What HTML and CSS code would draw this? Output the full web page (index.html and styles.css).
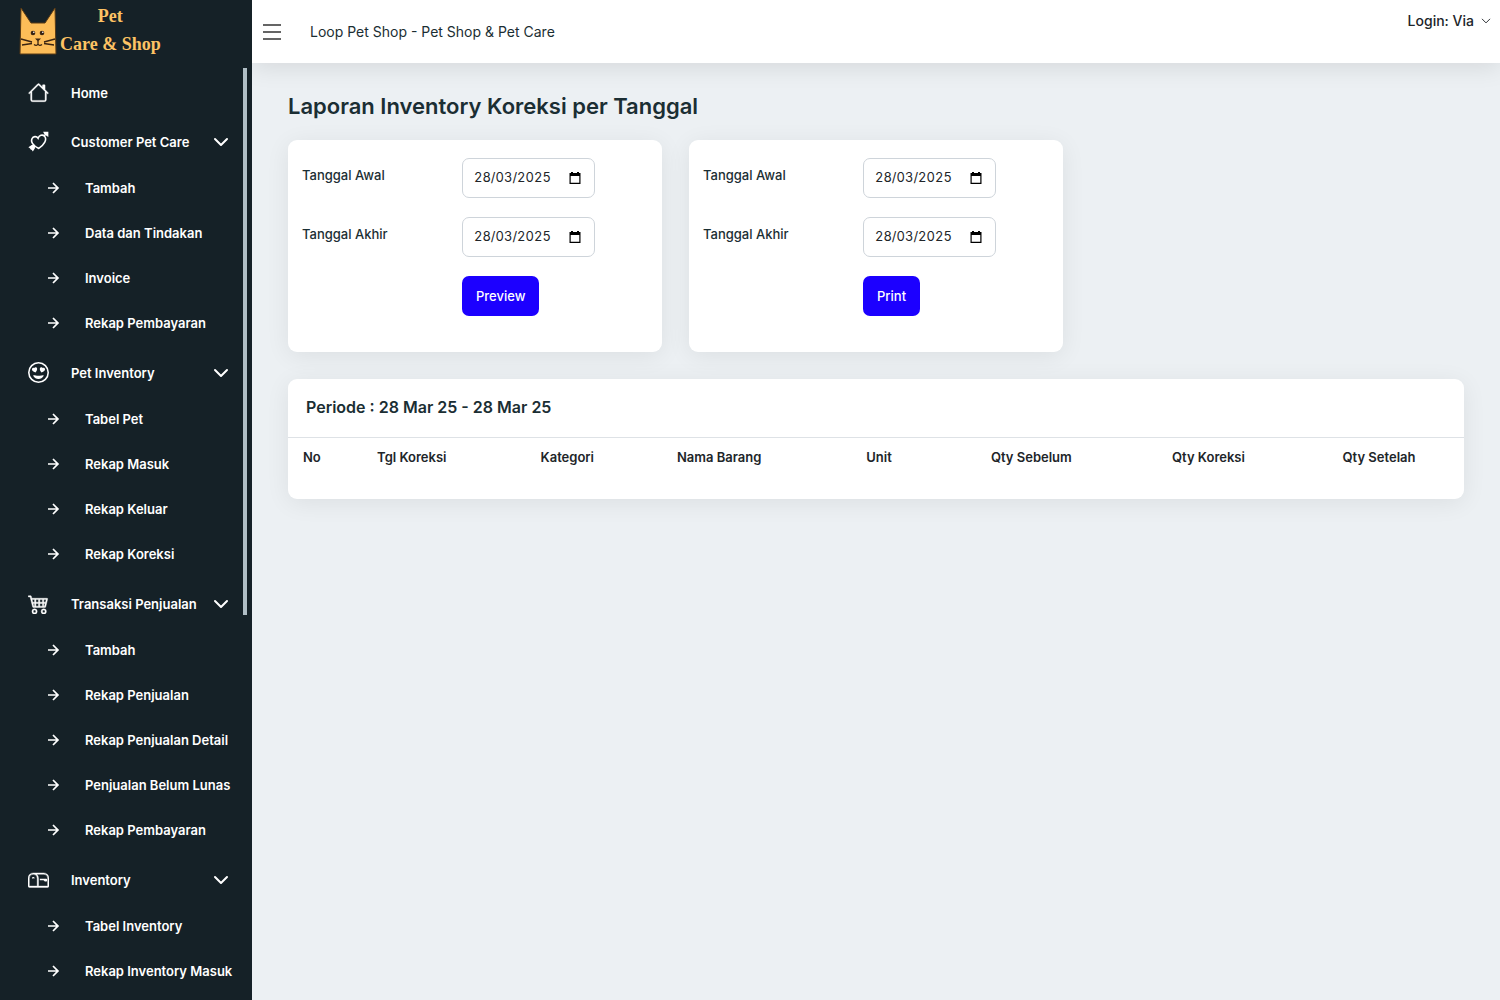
FILE: index.html
```html
<!DOCTYPE html>
<html lang="id">
<head>
    <meta charset="UTF-8">
    <meta name="viewport" content="width=device-width, initial-scale=1.0">
    <title>Loop Pet Shop - Pet Shop &amp; Pet Care</title>
    <link rel="stylesheet" href="styles.css">
</head>
<body>
    <!-- shared icons -->
    <svg class="sprite" aria-hidden="true">
        <symbol id="arrow" viewBox="0 0 24 24">
            <path d="m11.293 17.293 1.414 1.414L19.414 12l-6.707-6.707-1.414 1.414L15.586 11H6v2h9.586z" fill="currentColor"/>
        </symbol>
        <symbol id="chevron" viewBox="0 0 16 16">
            <path d="M2 5l6 6 6-6" fill="none" stroke="currentColor" stroke-width="2" stroke-linecap="round" stroke-linejoin="round"/>
        </symbol>
        <symbol id="chevron-thin" viewBox="0 0 16 16">
            <path d="M2 5l6 6 6-6" fill="none" stroke="currentColor" stroke-width="1.500" stroke-linecap="round" stroke-linejoin="round"/>
        </symbol>
        <symbol id="calendar" viewBox="0 0 12 12">
            <path d="M2 0h2v1h4V0h2v1h1.500v11H.5V1H2zM1.700 4v6.800h8.600V4z" fill="currentColor" fill-rule="evenodd"/>
        </symbol>
    </svg>

    <div class="wrapper">
        <aside class="sidebar">
            <a class="brand" href="#">
                <svg class="brand-cat" viewBox="0 0 40 50">
                    <path d="M3 2 13 17H27L37 2 38 48H2Z" fill="#fdbd58" stroke="#5a3a14" stroke-width="1"/>
                    <circle cx="15" cy="27" r="2.300" fill="#3a2412"/>
                    <circle cx="24" cy="27" r="2.300" fill="#3a2412"/>
                    <circle cx="15.800" cy="26.200" r=".8" fill="#fff"/>
                    <circle cx="24.800" cy="26.200" r=".8" fill="#fff"/>
                    <path d="M17 32.500h6l-3 3z" fill="#3a2412"/>
                    <path d="M20 35v3M16 38.500q2.500 2 4-.5 1.500 2.500 4 .5M3 33l11 3M4 39l10-1.500M37 33l-11 3M36 39l-10-1.500" fill="none" stroke="#3a2412" stroke-width="1.300"/>
                </svg>
                <span class="brand-text"><span>Pet</span><span>Care &amp; Shop</span></span>
            </a>

            <nav class="menu">
                <a class="menu-item" href="#">
                    <svg class="menu-icon" viewBox="0 0 16 16"><path fill="currentColor" stroke="currentColor" stroke-width=".3" d="M8.707 1.500a1 1 0 0 0-1.414 0L.646 8.146a.5.5 0 0 0 .708.708L2 8.207V13.500A1.500 1.500 0 0 0 3.500 15h9a1.500 1.500 0 0 0 1.500-1.500V8.207l.646.647a.5.5 0 0 0 .708-.708L13 5.793V2.500a.5.5 0 0 0-.5-.5h-1a.5.5 0 0 0-.5.5v1.293zM13 7.207V13.500a.5.5 0 0 1-.5.5h-9a.5.5 0 0 1-.5-.5V7.207l5-5z"/></svg>
                    <span>Home</span>
                </a>

                <a class="menu-item" href="#">
                    <svg class="menu-icon" viewBox="0 0 16 16"><path d="M8.200 13.300C4.500 11.500 1.800 8.600 3 5.900c.9-2 3.500-2.200 4.700-.4.8-2.200 3.300-3.100 4.900-1.500 2.200 2.400-.2 6.400-4.400 9.300z" fill="none" stroke="currentColor" stroke-width="1.200"/><path d="M12 4l2.500-2.500M4.800 11.200 2 14" stroke="currentColor" stroke-width="1.200"/><path d="M11.500.5h4v4l-1.500-.8-1.700-1.700zM.3 12.300l2.500-1.600h1.700l.8.800v1.700l-1.600 2.500-1.200-1.800z" fill="currentColor"/></svg>
                    <span>Customer Pet Care</span>
                    <svg class="chevron"><use href="#chevron"/></svg>
                </a>
                <div class="submenu">
                    <a href="#"><svg><use href="#arrow"/></svg>Tambah</a>
                    <a href="#"><svg><use href="#arrow"/></svg>Data dan Tindakan</a>
                    <a href="#"><svg><use href="#arrow"/></svg>Invoice</a>
                    <a href="#"><svg><use href="#arrow"/></svg>Rekap Pembayaran</a>
                </div>

                <a class="menu-item" href="#">
                    <svg class="menu-icon" viewBox="0 0 16 16"><circle cx="8" cy="8" r="7.400" fill="none" stroke="currentColor" stroke-width="1.200"/><path fill="currentColor" d="M11.315 10.014a.5.5 0 0 1 .548.736A4.500 4.500 0 0 1 7.965 13a4.500 4.500 0 0 1-3.898-2.250.5.5 0 0 1 .548-.736h.005l.017.005.067.015.252.055c.215.046.515.108.857.169.693.124 1.522.242 2.152.242s1.460-.118 2.152-.242a27 27 0 0 0 1.109-.224l.067-.015.017-.004zM4.756 4.566c.763-1.424 4.020-.12.952 3.434-4.496-1.596-2.350-4.298-.952-3.434m6.488 0c1.398-.864 3.544 1.838-.952 3.434-3.067-3.554.190-4.858.952-3.434"/></svg>
                    <span>Pet Inventory</span>
                    <svg class="chevron"><use href="#chevron"/></svg>
                </a>
                <div class="submenu">
                    <a href="#"><svg><use href="#arrow"/></svg>Tabel Pet</a>
                    <a href="#"><svg><use href="#arrow"/></svg>Rekap Masuk</a>
                    <a href="#"><svg><use href="#arrow"/></svg>Rekap Keluar</a>
                    <a href="#"><svg><use href="#arrow"/></svg>Rekap Koreksi</a>
                </div>

                <a class="menu-item" href="#">
                    <svg class="menu-icon" viewBox="0 0 16 16"><path fill="currentColor" stroke="currentColor" stroke-width=".3" d="M0 2.500A.5.5 0 0 1 .5 2H2a.5.5 0 0 1 .485.379L2.890 4H14.500a.5.5 0 0 1 .485.621l-1.500 6A.5.5 0 0 1 13 11H4a.5.5 0 0 1-.485-.379L1.610 3H.5a.5.5 0 0 1-.5-.5M3.140 5l.5 2H5V5zM6 5v2h2V5zm3 0v2h2V5zm3 0v2h1.360l.5-2zm1.110 3H12v2h.610zM11 8H9v2h2zM8 8H6v2h2zM5 8H3.890l.5 2H5zm0 5a1 1 0 1 0 0 2 1 1 0 0 0 0-2m-2 1a2 2 0 1 1 4 0 2 2 0 0 1-4 0m9-1a1 1 0 1 0 0 2 1 1 0 0 0 0-2m-2 1a2 2 0 1 1 4 0 2 2 0 0 1-4 0"/></svg>
                    <span>Transaksi Penjualan</span>
                    <svg class="chevron"><use href="#chevron"/></svg>
                </a>
                <div class="submenu">
                    <a href="#"><svg><use href="#arrow"/></svg>Tambah</a>
                    <a href="#"><svg><use href="#arrow"/></svg>Rekap Penjualan</a>
                    <a href="#"><svg><use href="#arrow"/></svg>Rekap Penjualan Detail</a>
                    <a href="#"><svg><use href="#arrow"/></svg>Penjualan Belum Lunas</a>
                    <a href="#"><svg><use href="#arrow"/></svg>Rekap Pembayaran</a>
                </div>

                <a class="menu-item" href="#">
                    <svg class="menu-icon" viewBox="0 0 16 16"><path fill="currentColor" stroke="currentColor" stroke-width=".3" d="M4 4a3 3 0 0 0-3 3v6h6V7a3 3 0 0 0-3-3m0-1h8a4 4 0 0 1 4 4v6a1 1 0 0 1-1 1H1a1 1 0 0 1-1-1V7a4 4 0 0 1 4-4m2.646 1A4 4 0 0 1 8 7v6h7V7a3 3 0 0 0-3-3z"/><path fill="currentColor" d="M11.793 8.500H9v-1h5a.5.5 0 0 1 .5.5v1a.5.5 0 0 1-.5.5h-1a.5.5 0 0 1-.354-.146zM5 7c0 .552-.448 0-1 0s-1 .552-1 0a1 1 0 0 1 2 0"/></svg>
                    <span>Inventory</span>
                    <svg class="chevron"><use href="#chevron"/></svg>
                </a>
                <div class="submenu">
                    <a href="#"><svg><use href="#arrow"/></svg>Tabel Inventory</a>
                    <a href="#"><svg><use href="#arrow"/></svg>Rekap Inventory Masuk</a>
                </div>
            </nav>
            <div class="scroll-thumb"></div>
        </aside>

        <div class="page">
            <header class="topbar">
                <button class="toggle" type="button" aria-label="Menu">
                    <svg viewBox="0 0 18 16"><path d="M0 1h18M0 8h18M0 15h18" stroke="currentColor" stroke-width="1.300"/></svg>
                </button>
                <span class="shop-name">Loop Pet Shop - Pet Shop &amp; Pet Care</span>
                <a class="login" href="#">Login: Via <svg><use href="#chevron-thin"/></svg></a>
            </header>

            <main class="content">
                <h1>Laporan Inventory Koreksi per Tanggal</h1>

                <div class="forms">
                    <form class="card form-card">
                        <label for="awal1">Tanggal Awal</label>
                        <div class="date">
                            <input type="text" id="awal1" value="28/03/2025">
                            <svg><use href="#calendar"/></svg>
                        </div>
                        <label for="akhir1">Tanggal Akhir</label>
                        <div class="date">
                            <input type="text" id="akhir1" value="28/03/2025">
                            <svg><use href="#calendar"/></svg>
                        </div>
                        <button class="btn" type="button">Preview</button>
                    </form>

                    <form class="card form-card">
                        <label for="awal2">Tanggal Awal</label>
                        <div class="date">
                            <input type="text" id="awal2" value="28/03/2025">
                            <svg><use href="#calendar"/></svg>
                        </div>
                        <label for="akhir2">Tanggal Akhir</label>
                        <div class="date">
                            <input type="text" id="akhir2" value="28/03/2025">
                            <svg><use href="#calendar"/></svg>
                        </div>
                        <button class="btn" type="button">Print</button>
                    </form>
                </div>

                <section class="card report">
                    <h2>Periode : 28 Mar 25 - 28 Mar 25</h2>
                    <table>
                        <thead>
                            <tr>
                                <th class="col-no">No</th>
                                <th class="col-tgl">Tgl Koreksi</th>
                                <th class="col-kategori">Kategori</th>
                                <th class="col-nama">Nama Barang</th>
                                <th class="col-unit">Unit</th>
                                <th class="col-sebelum">Qty Sebelum</th>
                                <th class="col-koreksi">Qty Koreksi</th>
                                <th>Qty Setelah</th>
                            </tr>
                        </thead>
                    </table>
                </section>
            </main>
        </div>
    </div>
</body>
</html>
```
FILE: styles.css
```css
* {
    box-sizing: border-box;
}
body {
    margin: 0;
    font-family: Inter, "Liberation Sans", sans-serif;
    font-size: 14px;
    color: #1b2e33;
    background: #ecf0f3;
}
a {
    color: inherit;
    text-decoration: none;
}
.sprite {
    display: none;
}
.wrapper {
    display: flex;
    height: 100vh;
}

/* sidebar */
.sidebar {
    position: relative;
    display: flex;
    flex-direction: column;
    flex: 0 0 252px;
    background: #152127;
    color: #fff;
}
.brand {
    display: flex;
    flex: 0 0 68px;
    align-items: flex-start;
    padding: 6px 18px;
    color: #fdc364;
}
.brand-cat {
    width: 40px;
    height: 50px;
}
.brand-text {
    display: flex;
    flex-direction: column;
    align-items: center;
    padding-left: 2px;
    font-family: "Liberation Serif", serif;
    font-size: 18px;
    font-weight: bold;
    line-height: 28px;
    margin-top: -4px;
}
.menu {
    display: flex;
    flex-direction: column;
    flex: 1;
    min-height: 0;
    padding-top: 1px;
    overflow-y: auto;
    scrollbar-width: none;
    font-size: 13px;
    font-weight: 600;
}
.menu-item {
    display: flex;
    flex: 0 0 47px;
    align-items: center;
    padding: 0 23px 0 28px;
}
.menu-item:first-child {
    margin-bottom: 2px;
}
.menu-icon {
    width: 21px;
    height: 21px;
    margin-right: 22px;
}
.chevron {
    width: 16px;
    height: 16px;
    margin-left: auto;
}
.submenu {
    margin-bottom: 4px;
}
.submenu a {
    display: flex;
    align-items: center;
    height: 45px;
    padding-left: 43px;
    white-space: nowrap;
}
.submenu svg {
    width: 20px;
    height: 20px;
    margin-right: 22px;
}
.scroll-thumb {
    position: absolute;
    top: 68px;
    right: 5px;
    width: 4px;
    height: 547px;
    background: #b0bec5;
}

/* top bar */
.page {
    flex: 1;
    min-width: 0;
}
.topbar {
    display: flex;
    align-items: center;
    height: 63px;
    padding: 0 9px 0 11px;
    background: #fff;
    box-shadow: 0 4px 24px rgba(0, 0, 0, 0.1);
}
.toggle {
    display: flex;
    padding: 0;
    margin-right: 29px;
    border: none;
    background: none;
    color: #333;
}
.toggle svg {
    width: 18px;
    height: 16px;
}
.login {
    display: flex;
    align-items: center;
    gap: 7px;
    align-self: flex-start;
    margin-left: auto;
    padding-top: 12px;
    font-weight: 500;
    color: #212529;
}
.login svg {
    width: 10px;
    height: 10px;
}

/* content */
.content {
    padding: 27px 36px;
}
h1 {
    margin: 0 0 18px;
    font-size: 22px;
    font-weight: 600;
    line-height: 32px;
}
.forms {
    display: grid;
    grid-template-columns: repeat(3, 1fr);
    gap: 27px;
    margin-bottom: 27px;
}
.card {
    border-radius: 9px;
    background: #fff;
    box-shadow: 0 4px 24px rgba(0, 0, 0, 0.07);
}
.form-card {
    display: grid;
    grid-template-columns: 160px auto;
    row-gap: 19px;
    justify-content: start;
    padding: 18px 14px 36px;
}
.form-card label {
    padding-top: 9px;
    font-size: 13px;
    font-weight: 500;
}
.date {
    position: relative;
    width: 133px;
}
.date input {
    display: block;
    width: 100%;
    height: 40px;
    padding: 0 11px 2px;
    border: 1px solid #ced4da;
    border-radius: 7px;
    font-family: inherit;
    font-size: 13px;
    font-variant-numeric: tabular-nums;
    color: #212529;
}
.date svg {
    position: absolute;
    top: 14px;
    right: 14px;
    width: 12px;
    height: 12px;
    color: #000;
}
.btn {
    grid-column: 2;
    justify-self: start;
    height: 40px;
    padding: 0 14px;
    border: none;
    border-radius: 7px;
    background: #1c00ff;
    color: #fff;
    font-family: inherit;
    font-size: 13px;
    font-weight: 500;
}
.report {
    padding-bottom: 21px;
}
.report h2 {
    margin: 0;
    padding: 17px 18px 19px;
    border-bottom: 1px solid #dee2e6;
    font-size: 16px;
    font-weight: 600;
    line-height: 22px;
}
table {
    width: 100%;
    border-collapse: collapse;
}
th {
    padding: 9px 15px 11px;
    font-size: 13px;
    font-weight: 600;
    line-height: 20px;
    text-align: left;
    white-space: nowrap;
    color: #212529;
}
.col-no { width: 6.3%; }
.col-tgl { width: 13.9%; }
.col-kategori { width: 11.6%; }
.col-nama { width: 16.1%; }
.col-unit { width: 10.6%; }
.col-sebelum { width: 15.4%; }
.col-koreksi { width: 14.5%; }
```
